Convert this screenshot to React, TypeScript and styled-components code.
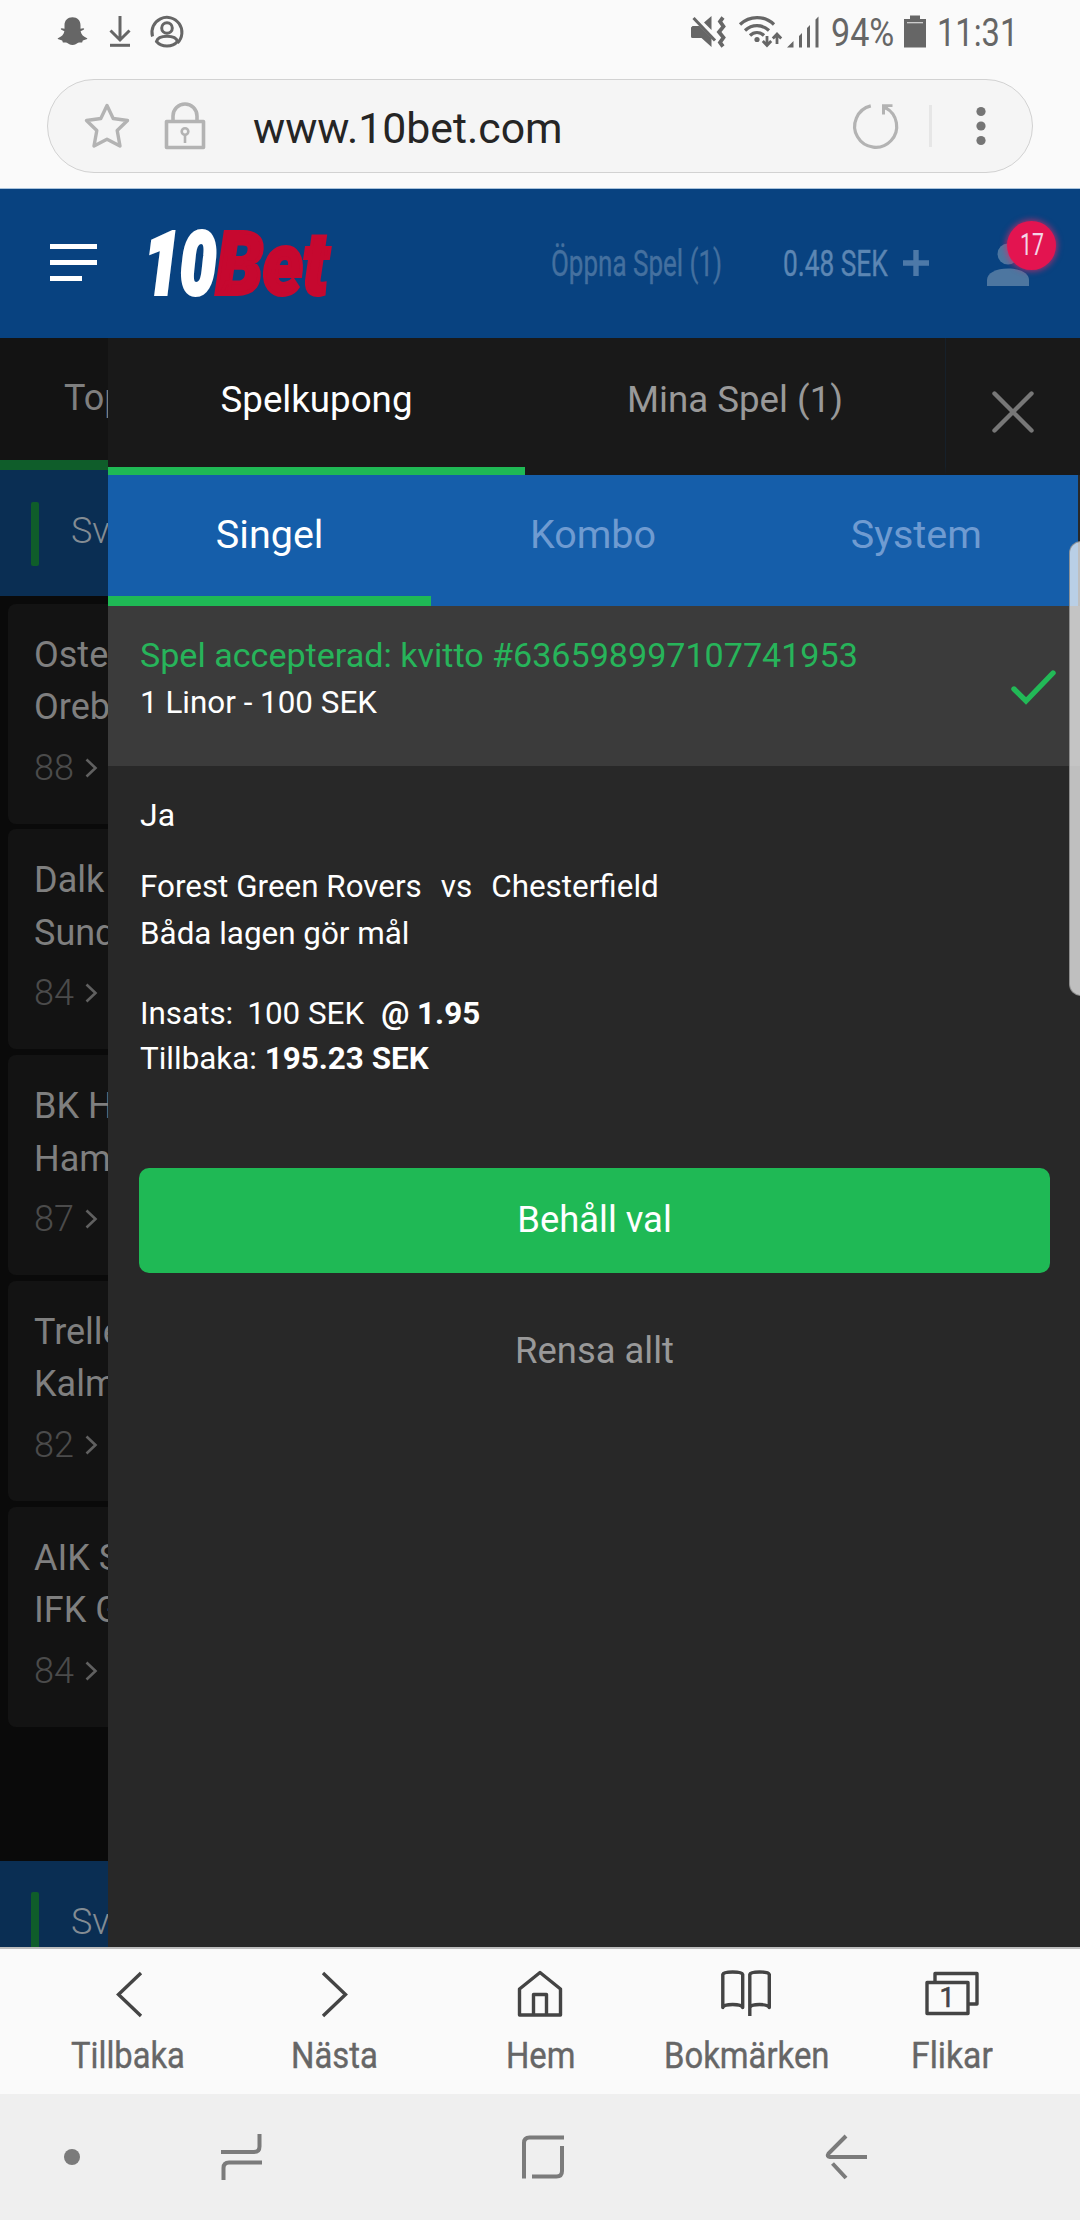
import React, { useLayoutEffect, useRef, useState } from "react";
import styled, { createGlobalStyle } from "styled-components";

const GlobalStyle = createGlobalStyle`
  * { box-sizing: border-box; }
  body { margin: 0; background: #fafafa; font-family: Roboto, "Liberation Sans", sans-serif; }
  svg { display: block; flex: none; overflow: visible; }
`;

/* ---------- condensed text: squeezed horizontally to a given width ---------- */

const FitBox = styled.span<{ $width: number }>`
  display: block;
  flex: none;
  width: ${(p) => p.$width}px;
  white-space: nowrap;
`;

const FitInner = styled.span`
  display: inline-block;
  transform-origin: 0 50%;
`;

function FitText({ width, children }: { width: number; children: React.ReactNode }) {
  const ref = useRef<HTMLSpanElement>(null);
  const [scale, setScale] = useState(1);
  useLayoutEffect(() => {
    if (ref.current) setScale(width / ref.current.offsetWidth);
  }, [width]);
  return (
    <FitBox $width={width}>
      <FitInner ref={ref} style={{ transform: `scaleX(${scale})` }}>
        {children}
      </FitInner>
    </FitBox>
  );
}

/* ---------- frame ---------- */

const Screen = styled.div`
  display: flex;
  flex-direction: column;
  position: relative;
  width: 1080px;
  height: 2220px;
  overflow: hidden;
  background: #fafafa;
`;

const StatusBar = styled.div`
  display: flex;
  justify-content: space-between;
  height: 66px;
  padding: 0 62px 0 57px;
  color: #666;
  font-size: 39.5px;
  line-height: 66px;
`;

const StatusGroup = styled.div`
  display: flex;
  align-items: flex-start;
`;

const StatusIcon = styled.div<{ $left?: number }>`
  margin-left: ${(p) => p.$left ?? 0}px;
  padding-top: 14px;
`;

const StatusText = styled.div<{ $left: number }>`
  margin-left: ${(p) => p.$left}px;
`;

const AddressArea = styled.div`
  height: 122px;
  padding: 13px 47px 0;
`;

const AddressPill = styled.div`
  display: flex;
  align-items: center;
  height: 94px;
  padding: 0 46px 0 36px;
  border: 1px solid #d2d2d2;
  border-radius: 47px;
  background: #f5f5f5;
`;

const Url = styled.div`
  flex: 1;
  padding: 4px 0 0 47px;
  color: #252525;
  font-size: 42.8px;
  line-height: 50px;
`;

const PillDivider = styled.div`
  width: 3px;
  height: 42px;
  margin: 0 44px 0 30px;
  background: #e6e6e6;
`;

/* ---------- site header ---------- */

const SiteHeader = styled.header`
  display: flex;
  align-items: center;
  height: 150px;
  padding: 0 51px 2px 50px;
  border-top: 1px solid #a9c3dc;
  background: #084280;
`;

const MenuButton = styled.div`
  display: flex;
  flex-direction: column;
  gap: 10.7px;
  width: 47px;
`;

const MenuLine = styled.div<{ $width: number }>`
  width: ${(p) => p.$width}px;
  height: 5px;
  background: #fff;
`;

const LogoSlot = styled.div`
  flex: 1;
  margin-left: 50px;
`;

const HeaderText = styled.div<{ $color: string; $right: number }>`
  margin-right: ${(p) => p.$right}px;
  color: ${(p) => p.$color};
  font-size: 36px;
  line-height: 42px;
  padding-top: 2px;
  -webkit-text-stroke: 0.4px ${(p) => p.$color};
`;

const Account = styled.div`
  position: relative;
  margin-left: 58px;
  padding-top: 4px;
`;

const Badge = styled.div`
  position: absolute;
  left: 20px;
  top: -18px;
  display: flex;
  justify-content: center;
  width: 49px;
  height: 49px;
  border-radius: 50%;
  background: #e31450;
  box-shadow: 0 0 6px 1px rgba(227, 40, 100, 0.75);
  color: #f3d5e6;
  font-size: 31px;
  line-height: 48px;
`;

/* ---------- covered page on the left ---------- */

const Main = styled.main`
  display: grid;
  grid-template-columns: 108px 972px;
  height: 1609px;
  overflow: hidden;
  background: #282828;
`;

const CoveredPage = styled.div`
  overflow: hidden;
  background: #0a0a0a;
  color: #7f7f7f;
  font-size: 36px;
  white-space: nowrap;
`;

const CoveredTab = styled.div`
  height: 132px;
  padding-left: 64px;
  border-bottom: 10.5px solid #0f5d2a;
  background: #131313;
  line-height: 121px;
`;

const LeagueBar = styled.div<{ $top?: number }>`
  display: flex;
  height: 126px;
  margin-top: ${(p) => p.$top ?? 0}px;
  padding-left: 31px;
  background: #0a2e53;
  color: #848c93;
  font-weight: 300;
  line-height: 123px;
`;

const LeagueMark = styled.div`
  flex: none;
  width: 8px;
  height: 64px;
  margin: 31.5px 32px 0 0;
  border-radius: 2px;
  background: #0f5d2a;
`;

const MatchList = styled.div`
  display: flex;
  flex-direction: column;
  gap: 5.75px;
  padding: 7.5px 0 0 8px;
`;

const MatchCard = styled.div`
  width: 400px;
  height: 220px;
  padding: 25px 0 0 26px;
  border-radius: 8px;
  background: #131313;
`;

const Team = styled.div`
  line-height: 52.5px;
`;

const MarketCount = styled.div`
  display: flex;
  align-items: center;
  gap: 11px;
  margin-top: 8px;
  color: #4b4b4b;
  font-weight: 300;
  line-height: 52px;
`;

/* ---------- bet slip panel ---------- */

const Panel = styled.section`
  display: flex;
  flex-direction: column;
  background: #282828;
`;

const SlipTabs = styled.div`
  display: grid;
  grid-template-columns: 417px 421px 1fr;
  height: 137px;
  background: #191919;
`;

const SlipTab = styled.div<{ $active?: boolean }>`
  height: 137px;
  border-bottom: 8px solid ${(p) => (p.$active ? "#1fb955" : "transparent")};
  border-right: ${(p) => (p.$active ? "none" : "1px solid #16202a")};
  color: ${(p) => (p.$active ? "#fff" : "#999")};
  font-size: 36.7px;
  line-height: 124px;
  text-align: center;
`;

const CloseSlot = styled.div`
  display: flex;
  align-items: center;
  justify-content: center;
  padding-top: 11px;
`;

const TypeTabs = styled.div`
  display: grid;
  grid-template-columns: repeat(3, 1fr);
  width: 970px;
  height: 131px;
  background: #155eaa;
`;

const TypeTab = styled.div<{ $active?: boolean }>`
  border-bottom: 10px solid ${(p) => (p.$active ? "#1fb955" : "transparent")};
  color: ${(p) => (p.$active ? "#fff" : "#6f9bd1")};
  font-size: 39.5px;
  line-height: 120px;
  text-align: center;
`;

const Receipt = styled.div`
  display: flex;
  justify-content: space-between;
  height: 160px;
  padding: 25px 24px 0 32px;
  background: #3b3b3b;
`;

const ReceiptTitle = styled.div`
  color: #27b45a;
  font-size: 34.1px;
  line-height: 48px;
`;

const ReceiptSummary = styled.div`
  color: #fff;
  font-size: 31.4px;
  line-height: 48px;
`;

const CheckSlot = styled.div`
  padding-top: 39px;
`;

const SlipBody = styled.div`
  display: flex;
  flex-direction: column;
  padding: 29px 30px 0 31px;
  color: #fff;
  font-size: 31.4px;
`;

const Pick = styled.div`
  padding-left: 1px;
  font-size: 32px;
  line-height: 40px;
`;

const Group = styled.div<{ $top: number; $line: number }>`
  margin-top: ${(p) => p.$top}px;
  padding-left: 1px;
  line-height: ${(p) => p.$line}px;
`;

const Row = styled.div<{ $gap: number }>`
  display: flex;
  gap: ${(p) => p.$gap}px;
`;

const Odds = styled.b`
  margin-left: 3px;
`;

const KeepButton = styled.button`
  height: 105px;
  margin: 87px 0 0;
  padding: 0 0 3px;
  border: 0;
  border-radius: 10px;
  background: #1fb955;
  color: #fff;
  font: 400 36.4px Roboto, "Liberation Sans", sans-serif;
`;

const ClearLink = styled.div`
  margin-top: 48px;
  color: #999;
  font-size: 36.4px;
  line-height: 60px;
  text-align: center;
`;

const EdgeHandle = styled.div`
  position: absolute;
  left: 1069px;
  top: 541px;
  width: 24px;
  height: 455px;
  border: 1px solid rgba(120, 120, 120, 0.7);
  border-radius: 14px;
  background: rgba(255, 255, 255, 0.7);
`;

/* ---------- browser toolbar and system navigation ---------- */

const Toolbar = styled.nav`
  display: grid;
  grid-template-columns: repeat(5, 206px);
  height: 147px;
  padding-left: 25px;
  border-top: 2px solid #bdbdbd;
  background: #fafafa;
`;

const ToolItem = styled.div`
  display: flex;
  flex-direction: column;
  align-items: center;
  padding-top: 20px;
  color: #666;
  font-size: 37px;
  line-height: 44px;
  -webkit-text-stroke: 0.4px #666;
`;

const ToolIcon = styled.div`
  height: 65px;
`;

const SystemNav = styled.div`
  display: flex;
  align-items: center;
  height: 126px;
  padding-left: 64px;
  background: #efefef;
`;

const NavItem = styled.div<{ $left?: number }>`
  margin-left: ${(p) => p.$left ?? 0}px;
`;

const matches = [
  { home: "Oste", away: "Oreb", count: 88 },
  { home: "Dalk", away: "Sund", count: 84 },
  { home: "BK H", away: "Ham", count: 87 },
  { home: "Trelle", away: "Kalm", count: 82 },
  { home: "AIK S", away: "IFK G", count: 84 },
];

function Snapchat() {
  return (
    <svg width="31" height="34" viewBox="0 0 31 34" fill="#666">
      <path d="M15.5 3.2c4.8 0 8 3.2 8 8v3.600l2.800-.6c1 0 1.200 1 .3 1.500l-3 1.600c.6 3.200 3 5.600 6 6.600 1 .4.900 1-.1 1.400l-3.700 1.300-.7 2c-1.400-.2-2.700-.4-4 .2-1.700.9-3 2.300-5.600 2.300s-3.900-1.400-5.600-2.300c-1.300-.6-2.600-.4-4-.2l-.7-2-3.700-1.300c-1-.4-1.100-1-.1-1.400 3-1 5.400-3.400 6-6.600l-3-1.600c-.9-.5-.7-1.500.3-1.500l2.800.6v-3.600c0-4.800 3.200-8 8-8z" />
    </svg>
  );
}

function Download() {
  return (
    <svg width="22" height="34" viewBox="0 0 22 34" fill="none" stroke="#666" strokeWidth="3">
      <path d="M11 2v24M1.500 16.500 11 26l9.500-9.500" />
      <path d="M1 31.300h20" />
    </svg>
  );
}

function Person() {
  return (
    <svg width="34" height="34" viewBox="0 0 34 34" fill="none" stroke="#666" strokeWidth="3">
      <path d="M2.500 22.500A15 15 0 1 1 27.500 29" />
      <circle cx="17" cy="14" r="5.300" />
      <path d="M6.500 27.500c1-3.500 5.500-5.300 10.500-5.300s9.500 1.800 10.500 5.300c-2.500 3-6 4.500-10.500 4.500s-8-1.500-10.500-4.500z" />
    </svg>
  );
}

function MuteVibrate() {
  return (
    <svg width="34" height="34" viewBox="0 0 34 34">
      <path d="M0 13.500 1.500 12h7l12 12.300V33l-10-9H1.500Q0 24 0 22.500zM13 8.500l7.500-6.500v14z" fill="#666" />
      <path d="M2.500 4 24 26.500" stroke="#666" strokeWidth="3" />
      <path d="M32 3.500l-3 4 3.500 5-4.500 5.500 4.500 5.500-3.500 5 3 4" fill="none" stroke="#666" strokeWidth="3.800" />
    </svg>
  );
}

function Wifi() {
  return (
    <svg width="43" height="34" viewBox="0 0 43 34" fill="none" stroke="#666" strokeWidth="3.200">
      <path d="M1 10.500c9.500-9.300 24.500-9.300 34 0M6 16.500c7-6.500 17-6.500 24 0M11 21.500c4-4 10-4 14 0" />
      <circle cx="18" cy="25.500" r="2.600" fill="#666" stroke="none" />
      <path d="M28 22v9M23.800 27l4.200 4.500 4.200-4.500M38 30V20.500M33.800 24.500l4.200-4.500 4.200 4.500" strokeWidth="2.800" />
    </svg>
  );
}

function Signal() {
  return (
    <svg width="32" height="34" viewBox="0 0 32 34" fill="#666">
      <path d="M0 33.500 6.500 27v6.500zM12 22l3-3v14.500h-3zM20 14l3-3v22.500h-3zM28.500 5.500l3-3v31h-3z" />
    </svg>
  );
}

function Battery() {
  return (
    <svg width="22" height="34" viewBox="0 0 22 34" fill="#666">
      <path d="M6 1.500h10v3.500h6v28.500H0V5h6z" />
      <path d="M3 8.700h16" stroke="#d8d8d8" strokeWidth="1.200" />
    </svg>
  );
}

function Star() {
  return (
    <svg width="46" height="46" viewBox="0 0 46 46" fill="none" stroke="#b3b3b3" strokeWidth="3.400" strokeLinejoin="round">
      <path d="M23 2.500 29.200 15.500 43.500 17.500 33.200 27.500 36 43 23 36.300 10 43 12.800 27.500 2.500 17.500 16.800 15.500z" />
    </svg>
  );
}

function Lock() {
  return (
    <svg width="42" height="48" viewBox="0 0 42 48" fill="none" stroke="#b3b3b3" strokeWidth="3.600" strokeLinejoin="round">
      <path d="M2.500 19.500h37v26h-37zM9 19V14a12 12 0 0 1 24 0v5" />
      <circle cx="21" cy="29.500" r="3.300" strokeWidth="2.600" />
      <path d="M21 33v8" strokeWidth="2.600" />
    </svg>
  );
}

function Reload() {
  return (
    <svg width="46" height="46" viewBox="0 0 46 46" fill="none" stroke="#b3b3b3" strokeWidth="3.200">
      <path d="M17.800 2.900A21 21 0 1 0 32.200 4.600" />
      <path d="M29 1.300h10.500v2.800h-4l-3.500 3v4.400h-3z" fill="#b3b3b3" stroke="none" />
    </svg>
  );
}

function Dots() {
  return (
    <svg width="10" height="42" viewBox="0 0 10 42" fill="#757575">
      <circle cx="5" cy="6.500" r="4.600" />
      <circle cx="5" cy="21" r="4.600" />
      <circle cx="5" cy="35.500" r="4.600" />
    </svg>
  );
}

function Logo() {
  return (
    <svg
      width="183"
      height="66"
      viewBox="0 0 183 66"
      fontFamily="Roboto, sans-serif"
      fontWeight="900"
      fontStyle="italic"
      fontSize="87"
      strokeWidth="4"
    >
      <text x="-3" y="63.500" fill="#fff" stroke="#fff" textLength="72" lengthAdjust="spacingAndGlyphs">
        10
      </text>
      <text x="69" y="63.500" fill="#c6082f" stroke="#c6082f" textLength="112" lengthAdjust="spacingAndGlyphs">
        Bet
      </text>
    </svg>
  );
}

function ToolLabel({ icon, width, label }: { icon: React.ReactNode; width: number; label: string }) {
  return (
    <ToolItem>
      <ToolIcon>{icon}</ToolIcon>
      <FitText width={width}>{label}</FitText>
    </ToolItem>
  );
}

const toolStroke = { fill: "none", stroke: "#444", strokeWidth: 3.4 } as const;

export default function App() {
  return (
    <Screen>
      <GlobalStyle />
      <StatusBar>
        <StatusGroup>
          <StatusIcon><Snapchat /></StatusIcon>
          <StatusIcon $left={21}><Download /></StatusIcon>
          <StatusIcon $left={19}><Person /></StatusIcon>
        </StatusGroup>
        <StatusGroup>
          <StatusIcon><MuteVibrate /></StatusIcon>
          <StatusIcon $left={14}><Wifi /></StatusIcon>
          <StatusIcon $left={5}><Signal /></StatusIcon>
          <StatusText $left={12}><FitText width={63}>94%</FitText></StatusText>
          <StatusIcon $left={10}><Battery /></StatusIcon>
          <StatusText $left={11}><FitText width={81}>11:31</FitText></StatusText>
        </StatusGroup>
      </StatusBar>

      <AddressArea>
        <AddressPill>
          <Star />
          <NavItem $left={34}><Lock /></NavItem>
          <Url>www.10bet.com</Url>
          <Reload />
          <PillDivider />
          <Dots />
        </AddressPill>
      </AddressArea>

      <SiteHeader>
        <MenuButton>
          <MenuLine $width={47} />
          <MenuLine $width={47} />
          <MenuLine $width={32} />
        </MenuButton>
        <LogoSlot><Logo /></LogoSlot>
        <HeaderText $color="#44709f" $right={61}><FitText width={171}>Öppna Spel (1)</FitText></HeaderText>
        <HeaderText $color="#5c86b3" $right={15}><FitText width={105}>0.48 SEK</FitText></HeaderText>
        <svg width="26" height="26" viewBox="0 0 26 26" stroke="#4d79a8" strokeWidth="5.400">
          <path d="M13 0v26M0 13h26" />
        </svg>
        <Account>
          <svg width="42" height="43" viewBox="0 0 42 43" fill="#4d76a0">
            <circle cx="21" cy="11" r="10.500" />
            <path d="M0 43V37c0-7 9-11.500 21-11.500s21 4.500 21 11.500v6z" />
          </svg>
          <Badge><FitText width={24}>17</FitText></Badge>
        </Account>
      </SiteHeader>

      <Main>
        <CoveredPage>
          <CoveredTab>Top</CoveredTab>
          <LeagueBar><LeagueMark />Sv</LeagueBar>
          <MatchList>
            {matches.map((m) => (
              <MatchCard key={m.home}>
                <Team>{m.home}</Team>
                <Team>{m.away}</Team>
                <MarketCount>
                  {m.count}
                  <svg width="13" height="20" viewBox="0 0 13 20" fill="none" stroke="#606060" strokeWidth="2.600">
                    <path d="M1.500 1.500 10.500 10l-9 8.500" />
                  </svg>
                </MarketCount>
              </MatchCard>
            ))}
          </MatchList>
          <LeagueBar $top={134}><LeagueMark />Sv</LeagueBar>
        </CoveredPage>

        <Panel>
          <SlipTabs>
            <SlipTab $active>Spelkupong</SlipTab>
            <SlipTab>Mina Spel (1)</SlipTab>
            <CloseSlot>
              <svg width="42" height="42" viewBox="0 0 42 42" stroke="#777" strokeWidth="4.400" strokeLinecap="round">
                <path d="M2.500 2.500l37 37M39.500 2.500l-37 37" />
              </svg>
            </CloseSlot>
          </SlipTabs>
          <TypeTabs>
            <TypeTab $active>Singel</TypeTab>
            <TypeTab>Kombo</TypeTab>
            <TypeTab>System</TypeTab>
          </TypeTabs>
          <Receipt>
            <div>
              <ReceiptTitle>Spel accepterad: kvitto #636598997107741953</ReceiptTitle>
              <ReceiptSummary>1 Linor - 100 SEK</ReceiptSummary>
            </div>
            <CheckSlot>
              <svg width="45" height="35" viewBox="0 0 45 35" fill="none" stroke="#22b957" strokeWidth="5.400" strokeLinecap="round">
                <path d="M3 19 15 31 42 3" />
              </svg>
            </CheckSlot>
          </Receipt>
          <SlipBody>
            <Pick>Ja</Pick>
            <Group $top={28} $line={47}>
              <Row $gap={19}><span>Forest Green Rovers</span><span>vs</span><span>Chesterfield</span></Row>
              <div>Båda lagen gör mål</div>
            </Group>
            <Group $top={35} $line={44.5}>
              <Row $gap={14}><span>Insats:</span><span>100 SEK</span><Odds>@ 1.95</Odds></Row>
              <div>Tillbaka: <b>195.23 SEK</b></div>
            </Group>
            <KeepButton>Behåll val</KeepButton>
            <ClearLink>Rensa allt</ClearLink>
          </SlipBody>
        </Panel>
      </Main>

      <Toolbar>
        <ToolLabel
          width={114}
          label="Tillbaka"
          icon={<svg width="46" height="50" viewBox="0 0 46 50" {...toolStroke}><path d="M36 4 13.500 25.500 36 47" /></svg>}
        />
        <ToolLabel
          width={87}
          label="Nästa"
          icon={<svg width="46" height="50" viewBox="0 0 46 50" {...toolStroke}><path d="M12 4l22.500 21.500L12 47" /></svg>}
        />
        <ToolLabel
          width={69}
          label="Hem"
          icon={
            <svg width="46" height="50" viewBox="0 0 46 50" {...toolStroke} strokeLinejoin="round">
              <path d="M2.500 20 23 3.500 43.500 20v26h-41zM16.500 46V25.500h13V46" />
            </svg>
          }
        />
        <ToolLabel
          width={165}
          label="Bokmärken"
          icon={
            <svg width="50" height="50" viewBox="0 0 50 50" {...toolStroke} strokeLinejoin="round">
              <path d="M1.800 5.500Q2.500 3 11.700 3t10 2.500v33Q20.500 35.500 11.700 35.500T1.800 38.500zM28.800 47V5.500Q29.500 3 38.500 3t9.800 2.500v33Q47 35.500 38.500 35.500T28.800 38.500" />
            </svg>
          }
        />
        <ToolLabel
          width={82}
          label="Flikar"
          icon={
            <svg width="54" height="50" viewBox="0 0 54 50" {...toolStroke} strokeLinejoin="round">
              <path d="M2 13.500h41v31H2zM10 13V4.500h42V35h-8.500" />
              <text x="22" y="38" fill="#444" stroke="#444" strokeWidth="0.600" fontSize="27" textAnchor="middle">1</text>
            </svg>
          }
        />
      </Toolbar>

      <SystemNav>
        <svg width="16" height="16" viewBox="0 0 16 16"><circle cx="8" cy="8" r="8" fill="#7b7b7b" /></svg>
        <NavItem $left={141}>
          <svg width="41" height="46" viewBox="0 0 41 46" fill="none" stroke="#7b7b7b" strokeWidth="4">
            <path d="M0 18h33q5.500 0 5.500-5.500V0M41 28.500H8q-5.500 0-5.500 5.500v12" />
          </svg>
        </NavItem>
        <NavItem $left={260}>
          <svg width="42" height="44" viewBox="0 0 42 44" fill="none" stroke="#7b7b7b" strokeWidth="4">
            <path d="M42 2.500H7.500Q2 2.500 2 8v35.500M10 41.500h24.500q5.500 0 5.500-5.500V11" />
          </svg>
        </NavItem>
        <NavItem $left={262}>
          <svg width="41" height="46" viewBox="0 0 41 46" fill="none" stroke="#7b7b7b" strokeWidth="4">
            <path d="M41 23H4q-3.500-.5-1.500-3.500L20 2M6.500 29.500 20 44" />
          </svg>
        </NavItem>
      </SystemNav>
      <EdgeHandle />
    </Screen>
  );
}
